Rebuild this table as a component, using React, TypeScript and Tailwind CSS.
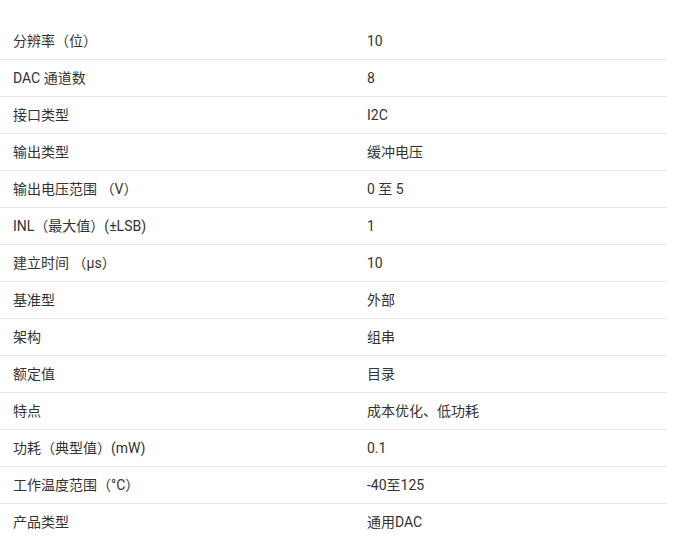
const specs: [string, string][] = [
  ['分辨率（位）', '10'],
  ['DAC 通道数', '8'],
  ['接口类型', 'I2C'],
  ['输出类型', '缓冲电压'],
  ['输出电压范围 （V）', '0 至 5'],
  ['INL（最大值）(±LSB)', '1'],
  ['建立时间 （µs）', '10'],
  ['基准型', '外部'],
  ['架构', '组串'],
  ['额定值', '目录'],
  ['特点', '成本优化、低功耗'],
  ['功耗（典型值）(mW)', '0.1'],
  ['工作温度范围（°C）', '-40至125'],
  ['产品类型', '通用DAC'],
];

export default function App() {
  return (
    <div className="w-[675px] h-[540px] overflow-hidden bg-white pt-[23px] font-['Roboto','Noto_Sans_CJK_SC',sans-serif] text-[14px] text-[#333333]">
      <div className="w-[667px]">
        {specs.map(([label, value], i) => (
          <div
            key={i}
            className="flex h-[37px] items-center border-b border-[#e5e5e5]"
          >
            <div className="w-[354px] pl-[13px]">{label}</div>
            <div className="flex-1 pl-[13px]">{value}</div>
          </div>
        ))}
      </div>
    </div>
  );
}
